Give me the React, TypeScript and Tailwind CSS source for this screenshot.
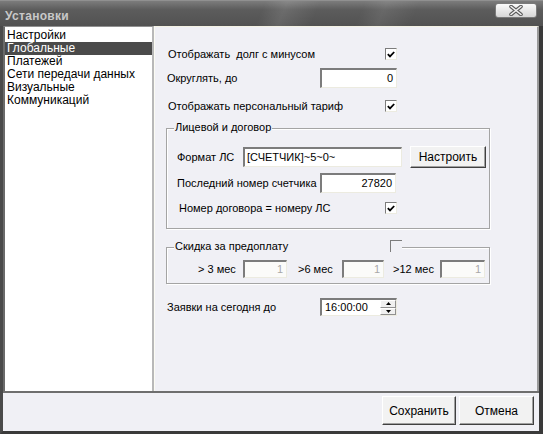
import React from "react";

const sunken =
  "border-t border-l border-b border-r border-t-[#7c7c7c] border-l-[#7c7c7c] border-b-[#ecebe0] border-r-[#ecebe0]";

function Check({ checked = true }: { checked?: boolean }) {
  return (
    <div className={`w-[12px] h-[12px] bg-white ${sunken} border-t-[#6c6c6c] border-l-[#6c6c6c] flex items-center justify-center`}>
      {checked && (
        <svg width="8" height="7" viewBox="0 0 8 7">
          <path d="M0.8 3.2 L3 5.4 L7.2 1" stroke="#000" strokeWidth="1.8" fill="none" />
        </svg>
      )}
    </div>
  );
}

function Input({
  w,
  h = 20,
  value,
  align = "right",
  muted = false,
}: {
  w: string;
  h?: number;
  value: string;
  align?: "right" | "left";
  muted?: boolean;
}) {
  return (
    <div
      className={`${w} ${h === 20 ? "h-[20px]" : "h-[18px]"} ${muted ? "bg-[#fbfbf9] text-[#a8a8a8]" : "bg-white text-black"} ${sunken} border-t-2 border-l-2 border-t-[#7a7a7a] border-l-[#7a7a7a] flex items-center ${align === "right" ? "justify-end pr-[3px]" : "justify-start pl-[2px]"} text-[11px] leading-none`}
    >
      {value}
    </div>
  );
}

function Btn({ children, w, h }: { children: React.ReactNode; w: string; h: string }) {
  return (
    <div
      className={`${w} ${h} bg-[#f2f2f2] border border-t-[#ffffff] border-l-[#ffffff] border-b-[#404040] border-r-[#404040] flex items-center justify-center shadow-[inset_-1px_-1px_0_#a0a0a0]`}
    >
      {children}
    </div>
  );
}

const groupBox =
  "relative w-[324px] border border-[#a4a4a4] shadow-[1px_1px_0_#ffffff,inset_1px_1px_0_#ffffff]";

export default function App() {
  const items = ["Настройки", "Глобальные", "Платежей", "Сети передачи данных", "Визуальные", "Коммуникаций"];
  return (
    <div className="w-[543px] h-[434px] flex flex-col bg-[#f0f0f5] font-['Liberation_Sans',Arial,sans-serif] text-black overflow-hidden">
      {/* Title bar */}
      <div className="relative h-[26px] shrink-0 flex items-center pl-[5px] bg-[linear-gradient(112deg,transparent_48%,rgba(255,255,255,0.10)_52%,transparent_58%,transparent_66%,rgba(255,255,255,0.08)_70%,transparent_76%),linear-gradient(to_bottom,#7c7c7c,#5c5c5c_35%,#525252)] border-t border-[#909090]">
        <span className="text-[12px] font-bold text-[#c8c8c8] mt-[4px] tracking-[0.3px]">Установки</span>
        <div className="absolute right-[6px] top-[2px] w-[42px] h-[15px] rounded-[3px] border border-[#7a7a7a] bg-[linear-gradient(to_bottom,#fafafa,#d6d6d6)] flex items-center justify-center">
          <svg width="16" height="11" viewBox="0 0 16 11">
            <path d="M3 1.5 L13 9.5 M13 1.5 L3 9.5" stroke="#5a5a5a" strokeWidth="3.6" strokeLinecap="round" />
            <path d="M3 1.5 L13 9.5 M13 1.5 L3 9.5" stroke="#f2f2f2" strokeWidth="1.6" strokeLinecap="round" />
          </svg>
        </div>
      </div>

      {/* Body */}
      <div className="flex-1 flex flex-col border-l-[3px] border-r-[4px] border-b-[3px] border-l-[#4a4a4a] border-r-[#3a3a3a] border-b-[#3a3a3a]">
        <div className="h-[367px] flex border-b-2 border-[#6e6e6e]">
          {/* List */}
          <div className="w-[151px] bg-white border-l-2 border-t border-r-2 border-l-[#6a6a6a] border-t-[#909090] border-r-[#b8b8b8] pt-[2px] text-[12px] leading-[13px]">
            {items.map((it, i) => (
              <div
                key={it}
                className={`h-[13px] pl-[2px] ${i === 1 ? "bg-[#4a4a4a] text-white" : ""}`}
              >
                {it}
              </div>
            ))}
          </div>

          {/* Right panel */}
          <div className="flex-1 border-l border-[#fbfbf3] border-r-2 border-r-[#9a9a9a] border-t border-t-[#f4f2e4] pl-[12px] text-[11px] leading-none flex flex-col">
            <div className="mt-[21px] h-[12px] flex items-center">
              <div className="w-[218px] pl-[1px]">Отображать&nbsp; долг с минусом</div>
              <Check />
            </div>
            <div className="mt-[8px] flex items-center">
              <div className="w-[153px]">Округлять, до</div>
              <Input w="w-[77px]" value="0" />
            </div>
            <div className="mt-[12px] h-[12px] flex items-center">
              <div className="w-[218px] pl-[1px]">Отображать персональный тариф</div>
              <Check />
            </div>

            {/* Group 1 */}
            <div className={`${groupBox} mt-[16px] ml-[-1px] h-[101px]`}>
              <div className="absolute left-[7px] top-[-7px] bg-[#f0f0f5] px-[1px]">Лицевой и договор</div>
              <div className="pl-[10px] flex flex-col">
                <div className="mt-[17px] h-[22px] flex items-center">
                  <div className="w-[66px]">Формат ЛС</div>
                  <Input w="w-[159px]" value="[СЧЕТЧИК]~5~0~" align="left" />
                  <div className="ml-[8px]">
                    <Btn w="w-[76px]" h="h-[22px]">
                      <span className="text-[12px]">Настроить</span>
                    </Btn>
                  </div>
                </div>
                <div className="mt-[5px] flex items-center">
                  <div className="w-[143px]">Последний номер счетчика</div>
                  <Input w="w-[76px]" value="27820" />
                </div>
                <div className="mt-[9px] h-[12px] flex items-center">
                  <div className="w-[208px] pl-[2px]">Номер договора = номеру ЛС</div>
                  <Check />
                </div>
              </div>
            </div>

            {/* Group 2 */}
            <div className={`${groupBox} mt-[18px] ml-[-1px] h-[37px]`}>
              <div className="absolute left-[7px] top-[-8px] w-[228px] h-[14px] bg-[#f0f0f5] flex items-start">
                <span className="ml-[1px] mt-[1px]">Скидка за предоплату</span>
                <div className="ml-auto w-[12px] h-[12px] border-t border-l border-[#7c7c7c]" />
              </div>
              <div className="mt-[12px] flex items-center">
                <div className="ml-[31px] w-[45px]">&gt; 3 мес</div>
                <Input w="w-[44px]" h={18} value="1" muted />
                <div className="ml-[11px] w-[44px]">&gt;6 мес</div>
                <Input w="w-[42px]" h={18} value="1" muted />
                <div className="ml-[9px] w-[47px]">&gt;12 мес</div>
                <Input w="w-[45px]" h={18} value="1" muted />
              </div>
            </div>

            <div className="mt-[14px] flex items-center">
              <div className="w-[153px]">Заявки на сегодня до</div>
              <div className={`w-[77px] h-[18px] bg-white ${sunken} border-t-2 border-l-2 border-t-[#7a7a7a] border-l-[#7a7a7a] flex items-center`}>
                <div className="flex-1 pl-[3px] text-[11px]">16:00:00</div>
                <div className="w-[16px] h-full flex flex-col">
                  <div className="flex-1 bg-[#f0f0f0] border border-t-white border-l-white border-b-[#909090] border-r-[#909090] flex items-center justify-center">
                    <svg width="5" height="3" viewBox="0 0 5 3"><path d="M2.5 0 L5 3 L0 3 Z" fill="#000" /></svg>
                  </div>
                  <div className="flex-1 bg-[#f0f0f0] border border-t-white border-l-white border-b-[#909090] border-r-[#909090] flex items-center justify-center">
                    <svg width="5" height="3" viewBox="0 0 5 3"><path d="M0 0 L5 0 L2.5 3 Z" fill="#000" /></svg>
                  </div>
                </div>
              </div>
            </div>
          </div>
        </div>

        {/* Bottom buttons */}
        <div className="flex-1 flex justify-end items-start pt-[3px] pr-[5px] gap-[3px] text-[12px]">
          <Btn w="w-[74px]" h="h-[29px]">Сохранить</Btn>
          <Btn w="w-[75px]" h="h-[29px]">Отмена</Btn>
        </div>
      </div>
    </div>
  );
}
